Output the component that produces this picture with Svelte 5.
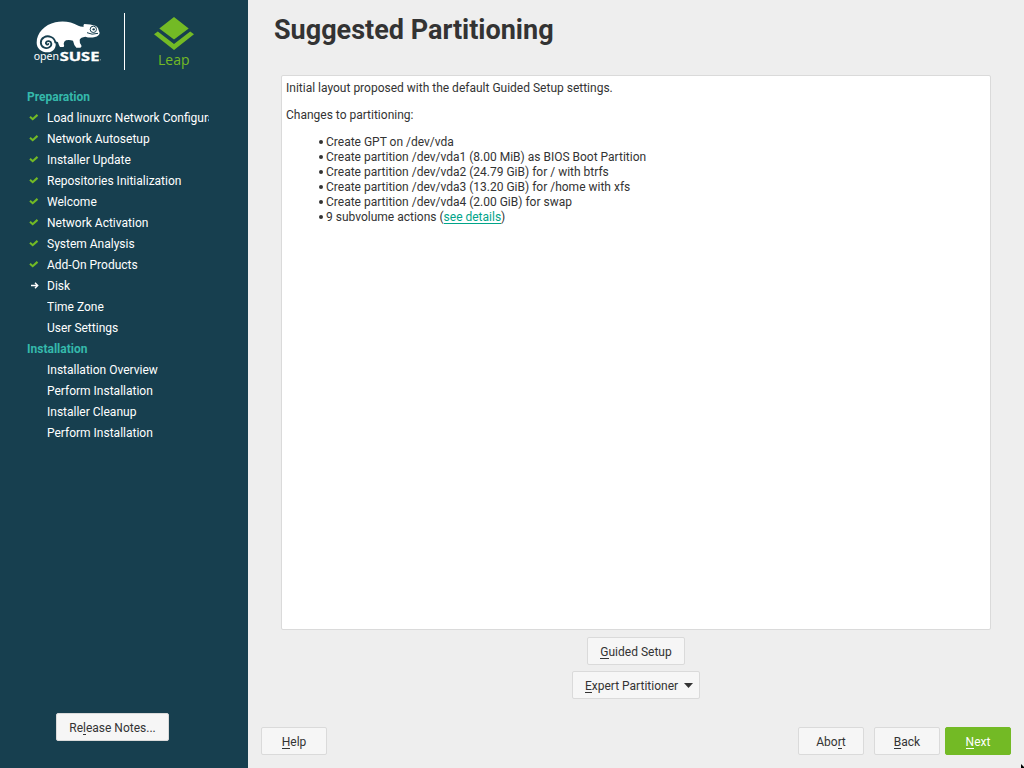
<script>
  const preparation = [
    ['Load linuxrc Network Configuration', 'done'],
    ['Network Autosetup', 'done'],
    ['Installer Update', 'done'],
    ['Repositories Initialization', 'done'],
    ['Welcome', 'done'],
    ['Network Activation', 'done'],
    ['System Analysis', 'done'],
    ['Add-On Products', 'done'],
    ['Disk', 'current'],
    ['Time Zone', ''],
    ['User Settings', '']
  ];
  const installation = [
    ['Installation Overview', ''],
    ['Perform Installation', ''],
    ['Installer Cleanup', ''],
    ['Perform Installation', '']
  ];
  const sections = [
    { title: 'Preparation', steps: preparation },
    { title: 'Installation', steps: installation }
  ];
  const actions = [
    'Create GPT on /dev/vda',
    'Create partition /dev/vda1 (8.00 MiB) as BIOS Boot Partition',
    'Create partition /dev/vda2 (24.79 GiB) for / with btrfs',
    'Create partition /dev/vda3 (13.20 GiB) for /home with xfs',
    'Create partition /dev/vda4 (2.00 GiB) for swap'
  ];
</script>

{#snippet key(before, letter, after)}
  <span>{before}<span class="key">{letter}</span>{after}</span>
{/snippet}

<div class="installer">
  <aside>
    <header class="logos">
      <svg class="suse" viewBox="0 0 270 192" width="90" height="64">
        <path fill="#fff" d="M38 104C38 75 62 50 94 43C116 37 143 41 163 53Q171 57 179 56Q177 50 181 48Q199 48 216 54Q224 59 224 67L227 75Q225 84 213 87Q198 91 184 86Q170 88 167 95Q166 105 172 112Q174 118 169 119H157Q150 113 147 98Q137 95 126 97Q119 101 119 108Q122 113 119 117H108Q104 111 102 103Q98 100 94 101C99 118 88 133 71 133C52 133 38 121 38 104Z" />
        <path fill="none" stroke="#173f4f" stroke-width="5.5" stroke-linecap="round" d="M94 104C92 88 73 80 60 88C47 95 48 112 59 118C69 124 83 117 82 107C81 98 69 97 66 103C64 108 70 112 73 108" />
        <circle cx="208" cy="64" r="9.5" fill="none" stroke="#173f4f" stroke-width="3" />
        <circle cx="209" cy="64" r="3.5" fill="#173f4f" />
        <path d="M189 74Q203 82 222 76" fill="none" stroke="#173f4f" stroke-width="3" />
        <text x="29" y="157" textLength="76" lengthAdjust="spacingAndGlyphs" class="open">open</text>
        <text x="107" y="158" textLength="119" lengthAdjust="spacingAndGlyphs" class="bold">SUSE</text>
        <rect x="228" y="154" width="3" height="3" fill="#8ea3ac" />
      </svg>
      <span class="divider"></span>
      <svg class="leap" viewBox="0 0 40 54" width="40" height="54">
        <path fill="#73ba25" d="M20 0L34.7 11.5L20 22.5L5.3 11.5ZM3.8 14.5L20 27L36.2 14.5L40 17.3L20 33L0 17.3Z" />
        <text x="4" y="48" textLength="31.5" lengthAdjust="spacingAndGlyphs">Leap</text>
      </svg>
    </header>
    <nav>
      {#each sections as section}
        <h2>{section.title}</h2>
        {#each section.steps as [label, status]}
          <div class="step">
            <span class="mark">
              {#if status === 'done'}
                <svg width="10" height="8" viewBox="0 0 10 8"><path d="M1 2.8L3.7 5.2L8.5 .9" fill="none" stroke="#73ba25" stroke-width="2.1" /></svg>
              {:else if status === 'current'}
                <svg class="arrow" width="8" height="7" viewBox="0 0 8 7"><path d="M0 3.5H6.5M4 .8L6.7 3.5L4 6.2" fill="none" stroke="#fff" stroke-width="1.4" /></svg>
              {/if}
            </span>
            <span class="label">{label}</span>
          </div>
        {/each}
      {/each}
    </nav>
    <button class="release">{@render key('Re', 'l', 'ease Notes...')}</button>
  </aside>

  <main>
    <h1>Suggested Partitioning</h1>
    <section class="summary">
      <p>Initial layout proposed with the default Guided Setup settings.</p>
      <p>Changes to partitioning:</p>
      <ul>
        {#each actions as action}
          <li>{action}</li>
        {/each}
        <li>9 subvolume actions (<a href="#details">see details</a>)</li>
      </ul>
    </section>
    <div class="setup">
      <button class="guided">{@render key('', 'G', 'uided Setup')}</button>
      <button class="expert">{@render key('', 'E', 'xpert Partitioner')}<svg width="9" height="5" viewBox="0 0 9 5"><path d="M0 0H9L4.5 5Z" fill="#333" /></svg></button>
    </div>
    <footer>
      <button class="help">{@render key('', 'H', 'elp')}</button>
      <button>{@render key('Abo', 'r', 't')}</button>
      <button class="back">{@render key('', 'B', 'ack')}</button>
      <button class="next">{@render key('', 'N', 'ext')}</button>
    </footer>
    <svg class="pointer" width="3" height="4" viewBox="0 0 3 4"><path d="M0 0L3 3V4H0Z" fill="#000" /></svg>
  </main>
</div>

<style>
  :global(body) { margin: 0; overflow: hidden; }
  .installer { position: relative; display: flex; width: 1024px; height: 768px; overflow: hidden; background: #eee; color: #333; font: 12px/15px Roboto, sans-serif; }
  aside { display: flex; flex-direction: column; box-sizing: border-box; width: 248px; padding-bottom: 27px; background: #173f4f; color: #fff; }
  .logos { display: flex; align-items: flex-start; height: 87px; flex: none; }
  .suse { margin: 8px 0 0 24px; }
  .suse text { fill: #fff; font-family: "Noto Sans", sans-serif; font-size: 39px; }
  .suse .open { font-size: 35px; }
  .suse .bold { font-weight: 700; stroke: #fff; stroke-width: 1; }
  .divider { width: 1px; height: 57px; margin: 13px 0 0 10px; background: #fff; }
  .leap { margin: 17px 0 0 29px; }
  .leap text { fill: #73ba25; font: 15px "Open Sans", sans-serif; }
  nav { flex: 1; margin-left: 27px; width: 181.5px; }
  h2 { margin: 0; font-size: 12px; line-height: 21px; height: 21px; color: #35b9ab; }
  .step { display: flex; height: 21px; line-height: 21px; }
  .mark { width: 20px; flex: none; padding: 6px 0 0 2px; box-sizing: border-box; line-height: 0; }
  .arrow { margin-left: 2px; }
  .label { flex: 1; white-space: nowrap; overflow: hidden; }
  button { display: flex; align-items: center; justify-content: center; box-sizing: border-box; width: 66px; height: 28px; margin: 0; padding: 3px 0 0; border: 1px solid #dadada; border-radius: 2px; background: #f6f6f6; color: #333; font: inherit; }
  .release { width: 113px; margin-left: 56px; }
  .key { display: inline-block; height: 13px; line-height: 15px; border-bottom: 1px solid currentColor; vertical-align: top; }
  main { display: flex; flex-direction: column; width: 776px; }
  h1 { margin: 13px 0 0 26px; height: 62px; font-size: 27px; line-height: 34px; white-space: nowrap; }
  .summary { box-sizing: border-box; width: 710px; height: 555px; margin-left: 33px; padding: 5px 4px; border: 1px solid #dadada; border-radius: 2px; background: #fff; }
  p { margin: 0 0 12px; }
  ul { margin: 0; padding: 0 0 0 40px; list-style: none; }
  li { height: 15px; }
  li::before { content: ''; float: left; width: 4px; height: 4px; margin: 5px 0 0 -7px; border-radius: 50%; background: #333; }
  a { display: inline-block; height: 13px; color: #00a489; text-decoration: none; border-bottom: 1px solid; vertical-align: top; }
  .setup { display: flex; flex-direction: column; align-items: center; gap: 6px; margin: 7px 0 28px; }
  .guided { width: 98px; }
  .expert { width: 128px; gap: 6px; padding-left: 6px; }
  .expert svg { margin-top: -3px; }
  footer { display: flex; padding: 0 13px; }
  .help { margin-right: auto; }
  .back { margin: 0 5px 0 10px; }
  .next { background: #73ba25; border-color: #73ba25; color: #fff; }
  .pointer { position: absolute; right: 0; bottom: 0; }
</style>
